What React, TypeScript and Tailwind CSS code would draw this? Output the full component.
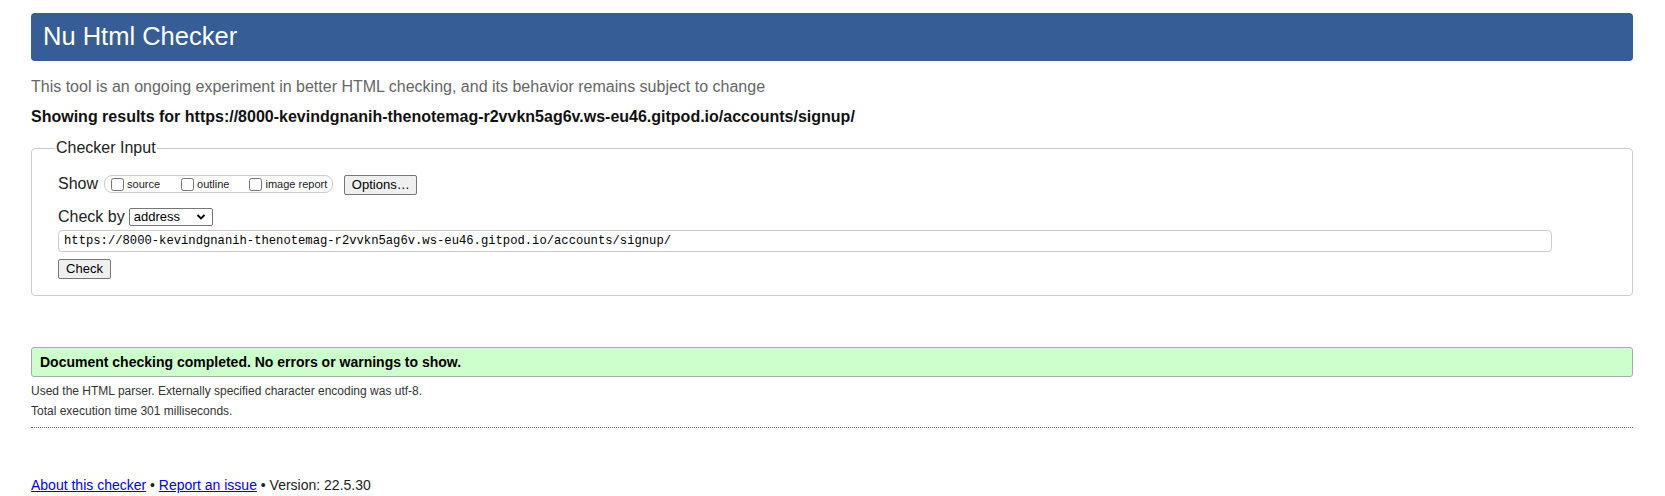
import React from "react";

export default function App() {
  return (
    <div className="min-h-[496px] bg-white pl-[31px] pr-[32px] pt-[13px] font-['Liberation_Sans',Arial,sans-serif] text-[#111]">
      <header className="flex h-[48px] items-center rounded-[4px] bg-[#365d95] pl-[12px]">
        <h1 className="text-[25.5px] leading-none text-white">Nu Html Checker</h1>
      </header>

      <p className="mt-[16px] text-[16px] leading-[20px] text-[#666]">
        This tool is an ongoing experiment in better HTML checking, and its behavior remains subject to change
      </p>

      <p className="mt-[10px] text-[16px] font-bold leading-[20px] text-[#111]">
        Showing results for https://8000-kevindgnanih-thenotemag-r2vvkn5ag6v.ws-eu46.gitpod.io/accounts/signup/
      </p>

      <fieldset className="mt-[11px] rounded-[4px] border border-[#ccc] pb-[16px] pl-[26px]">
        <legend className="ml-[-3px] px-[1px] text-[16px] leading-[20px] text-[#222]">Checker Input</legend>

        <div className="mt-[16px] flex h-[20px] items-center">
          <span className="text-[16px] leading-[20px] text-[#222]">Show</span>
          <div className="ml-[6px] flex h-[18px] items-center rounded-[8px] border border-[#ccc] pl-[6px] pr-[5px]">
            <label className="flex items-center">
              <input type="checkbox" className="m-0 h-[13px] w-[13px]" />
              <span className="ml-[3px] text-[11px] leading-[14px] text-[#222]">source</span>
            </label>
            <label className="ml-[21px] flex items-center">
              <input type="checkbox" className="m-0 h-[13px] w-[13px]" />
              <span className="ml-[3px] text-[11px] leading-[14px] text-[#222]">outline</span>
            </label>
            <label className="ml-[20px] flex items-center">
              <input type="checkbox" className="m-0 h-[13px] w-[13px]" />
              <span className="ml-[3px] text-[11px] leading-[14px] text-[#222]">image report</span>
            </label>
          </div>
          <button className="ml-[11px] mt-[2px] h-[20px] w-[73px] rounded-[2px] border border-[#767676] bg-[#efefef] text-[13px] leading-[18px] text-black">
            Options…
          </button>
        </div>

        <div className="mt-[13px] flex h-[20px] items-center">
          <span className="text-[16px] leading-[20px] text-[#222]">Check by</span>
          <div className="relative ml-[4px] flex h-[18px] w-[84px] items-center rounded-[2px] border border-[#767676] bg-white pl-[4px]">
            <span className="text-[13px] leading-[16px] text-black">address</span>
            <svg className="absolute right-[6px] top-[4px]" width="10" height="8" viewBox="0 0 10 8">
              <path d="M1.5 2 L5 5.5 L8.5 2" fill="none" stroke="#000" strokeWidth="1.8" />
            </svg>
          </div>
        </div>

        <div className="mt-[3px] flex h-[22px] w-[1494px] items-center rounded-[4px] border border-[#ccc] pl-[5px]">
          <span className="font-['Liberation_Mono',monospace] text-[12.2px] leading-[16px] text-black">
            https://8000-kevindgnanih-thenotemag-r2vvkn5ag6v.ws-eu46.gitpod.io/accounts/signup/
          </span>
        </div>

        <button className="mt-[7px] block h-[20px] w-[53px] rounded-[2px] border border-[#767676] bg-[#efefef] text-[13px] leading-[18px] text-black">
          Check
        </button>
      </fieldset>

      <div className="mt-[51px] flex h-[30px] items-center rounded-[3px] border border-[#aaa] bg-[#ccffcc] pl-[8px]">
        <p className="text-[14px] font-bold leading-[16px] text-black">
          Document checking completed. No errors or warnings to show.
        </p>
      </div>

      <p className="mt-[4px] text-[12px] leading-[20px] text-[#333]">
        Used the HTML parser. Externally specified character encoding was utf-8.
      </p>
      <p className="text-[12px] leading-[20px] text-[#333]">Total execution time 301 milliseconds.</p>

      <div className="mt-[6px] border-b border-dotted border-[#666]" />

      <p className="mt-[47px] text-[14px] leading-[20px] text-[#222]">
        <a href="#" className="text-[#0000ee] underline">About this checker</a>
        {" • "}
        <a href="#" className="text-[#0000ee] underline">Report an issue</a>
        {" • Version: 22.5.30"}
      </p>
    </div>
  );
}
